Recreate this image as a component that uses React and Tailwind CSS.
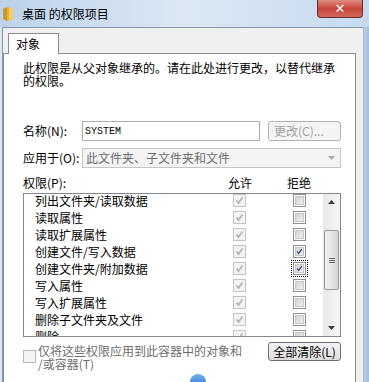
import React from 'react'

const rows = [
  { label: '列出文件夹/读取数据', deny: false },
  { label: '读取属性', deny: false },
  { label: '读取扩展属性', deny: false },
  { label: '创建文件/写入数据', deny: true },
  { label: '创建文件夹/附加数据', deny: true, focus: true },
  { label: '写入属性', deny: false },
  { label: '写入扩展属性', deny: false },
  { label: '删除子文件夹及文件', deny: false },
  { label: '删除', deny: false },
]

function Check({ color }) {
  return (
    <svg className="w-[9px] h-[9px]" viewBox="0 0 9 9">
      <path d="M1.5 4.5 L3.5 7 L7.5 1.5" fill="none" stroke={color} strokeWidth="1.8" />
    </svg>
  )
}

function AllowBox() {
  return (
    <div className="w-[13px] h-[13px] border border-[#c4c4c4] bg-[#f4f4f4] flex items-center justify-center">
      <Check color="#b5b5b5" />
    </div>
  )
}

function DenyBox({ checked }) {
  return (
    <div className="w-[13px] h-[13px] border border-[#8e8f8f] bg-white p-[1px]">
      <div className="w-full h-full border border-[#c7c7c7] bg-gradient-to-br from-[#d2d2d2] to-[#f2f2f2] flex items-center justify-center">
        {checked && <Check color="#3c4f86" />}
      </div>
    </div>
  )
}

function Folder() {
  return (
    <svg className="w-[10px] h-[14px]" viewBox="0 0 10 14">
      <path d="M0 2 L4 0 L4 14 L0 12 Z" fill="#c9962f" />
      <path d="M4 0 L10 1 L10 13 L4 14 Z" fill="#f2cf5c" />
      <path d="M4 0 L6 0.4 L6 13.6 L4 14 Z" fill="#e2b23e" />
    </svg>
  )
}

export default function App() {
  return (
    <div className="w-[369px] h-[382px] overflow-hidden flex flex-col bg-[#c3d8ee] font-['Noto_Sans_CJK_SC',sans-serif] text-[12px] text-black">
      {/* title bar */}
      <div className="h-[27px] flex items-start justify-between bg-gradient-to-r from-[#bcd2ea] via-[#dce8f5] to-[#c6daef]">
        <div className="flex items-center h-[27px] pl-[3px]">
          <Folder />
          <span className="ml-[9px] text-[12px] leading-none text-black">桌面 的权限项目</span>
        </div>
        <div className="w-[46px] h-[18px] mr-[6px] rounded-b-[4px] border border-t-0 border-[#6b2a26] bg-gradient-to-b from-[#e08c80] via-[#c8453a] to-[#d0685c] flex items-center justify-center">
          <span className="text-white text-[13px] font-bold leading-none font-['DejaVu_Sans',sans-serif]">✕</span>
        </div>
      </div>

      {/* body */}
      <div className="flex flex-1">
        <div className="w-[2px] bg-[#dbe7f4]" />
        <div className="w-[361px] border-l border-t border-[#8795a8] bg-[#f0f0f0] flex flex-col">
          <div className="ml-[5px] mt-[5px] -mb-px w-[51px] h-[21px] bg-white border border-b-0 border-[#898c95] relative z-10 pl-[7px] pt-[2px] leading-[16px]">
            对象
          </div>
          <div className="w-[353px] h-[340px] border border-[#898c95] bg-white pl-[19px] pr-[14px] pt-[7px]">
            <p className="leading-[13px]">
              此权限是从父对象继承的。请在此处进行更改，以替代继承
              <br />
              的权限。
            </p>

            <div className="mt-[34px] flex items-center h-[20px]">
              <span className="w-[59px]">名称(N):</span>
              <div className="w-[178px] h-[20px] border border-[#abadb3] bg-white flex items-center pl-[2px] font-['Liberation_Mono',monospace] text-[10px]">
                SYSTEM
              </div>
              <div className="ml-[8px] w-[73px] h-[20px] rounded-[3px] border border-[#adb2b5] bg-[#f4f4f4] flex items-center pl-[5px] text-[#a0a0a0]">
                更改(C)...
              </div>
            </div>

            <div className="mt-[7px] flex items-center h-[20px]">
              <span className="w-[59px]">应用于(O):</span>
              <div className="w-[259px] h-[20px] border border-[#c5c5c5] bg-[#f4f4f4] flex items-center justify-between pl-[3px] pr-[5px] text-[#6d6d6d]">
                <span>此文件夹、子文件夹和文件</span>
                <svg className="w-[7px] h-[4px]" viewBox="0 0 7 4">
                  <path d="M0 0 L7 0 L3.5 4 Z" fill="#a8a8a8" />
                </svg>
              </div>
            </div>

            <div className="mt-[8px] flex items-center h-[14px] leading-[14px]">
              <span className="w-[205px]">权限(P):</span>
              <span className="w-[24px]">允许</span>
              <span className="ml-[35px]">拒绝</span>
            </div>

            <div className="mt-[3px] w-[318px] h-[144px] border border-[#828790] bg-white flex overflow-hidden">
              <div className="flex-1 -mt-[2px]">
                {rows.map((r) => (
                  <div key={r.label} className="flex items-center h-[17px]">
                    <span className="w-[209px] pl-[11px] leading-[17px] whitespace-nowrap">{r.label}</span>
                    <AllowBox />
                    <div className={`ml-[47px] ${r.focus ? 'outline outline-1 outline-dotted outline-black outline-offset-[1px]' : ''}`}>
                      <DenyBox checked={r.deny} />
                    </div>
                  </div>
                ))}
              </div>
              <div className="w-[17px] bg-gradient-to-r from-[#e8e8e8] to-[#f6f6f6] flex flex-col items-center">
                <div className="h-[16px] flex items-center justify-center">
                  <svg className="w-[7px] h-[4px]" viewBox="0 0 7 4">
                    <path d="M3.5 0 L7 4 L0 4 Z" fill="#3c3c3c" />
                  </svg>
                </div>
                <div className="mt-[20px] w-[15px] h-[60px] rounded-[2px] border border-[#979797] bg-gradient-to-r from-[#f2f2f2] via-[#e6e6e6] to-[#d6d6d6] flex items-center justify-center">
                  <div className="flex flex-col gap-[1px]">
                    <div className="w-[6px] h-px bg-[#666]" />
                    <div className="w-[6px] h-px bg-[#666]" />
                    <div className="w-[6px] h-px bg-[#666]" />
                  </div>
                </div>
                <div className="flex-1" />
                <div className="h-[16px] flex items-center justify-center">
                  <svg className="w-[7px] h-[4px]" viewBox="0 0 7 4">
                    <path d="M0 0 L7 0 L3.5 4 Z" fill="#3c3c3c" />
                  </svg>
                </div>
              </div>
            </div>

            <div className="mt-[5px] flex justify-between items-start">
              <div className="flex items-start">
                <div className="mt-[8px] w-[13px] h-[13px] border border-[#b8b8b8] bg-[#f4f4f4]" />
                <p className="ml-[2px] mt-[2px] leading-[13px] text-[#6d6d6d]">
                  仅将这些权限应用到此容器中的对象和
                  <br />
                  /或容器(T)
                </p>
              </div>
              <div className="w-[73px] h-[19px] rounded-[3px] border border-[#707070] bg-gradient-to-b from-[#f4f4f4] to-[#dcdcdc] flex items-center justify-center leading-none">
                全部清除(L)
              </div>
            </div>

            <div className="mt-[4px] ml-[167px] w-[16px] h-[16px] rounded-full bg-gradient-to-b from-[#6fb0ee] to-[#2a6fc4]" />
          </div>
        </div>
        <div className="flex-1 border-l border-[#a8b8c9] bg-gradient-to-r from-[#b7cfe8] to-[#9fbfe0]" />
      </div>
    </div>
  )
}
